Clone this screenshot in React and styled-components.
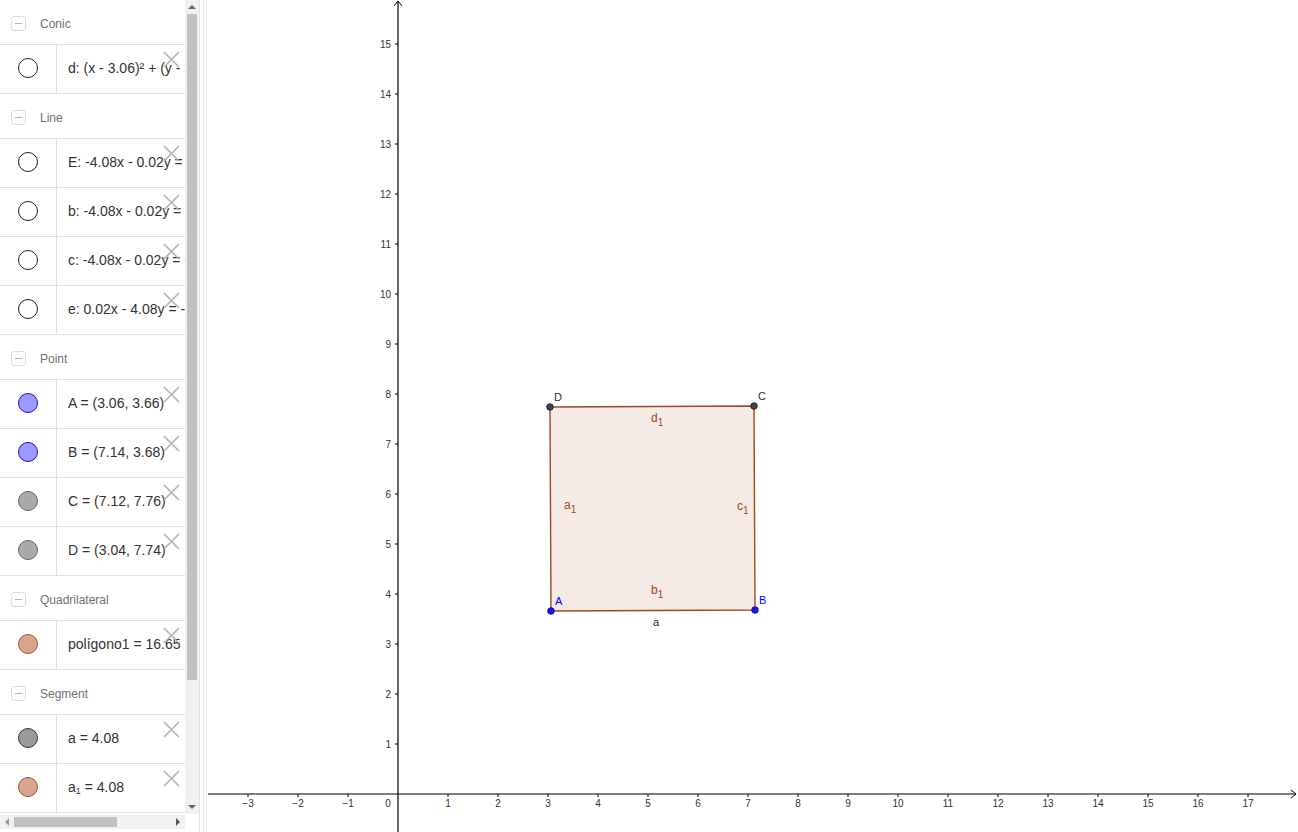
import React from 'react';
import styled, { createGlobalStyle } from 'styled-components';

const GlobalStyle = createGlobalStyle`
  html, body {
    margin: 0;
    padding: 0;
    background: #fff;
    overflow: hidden;
  }
  body {
    font-family: "Liberation Sans", Arial, sans-serif;
  }
`;

const sections = [
  {
    title: 'Conic',
    items: [{ id: 'd', text: 'd: (x - 3.06)² + (y - 3.7)² = 16.65', fill: '#fff', stroke: '#222' }],
  },
  {
    title: 'Line',
    items: [
      { id: 'E', text: 'E: -4.08x - 0.02y = -12.56', fill: '#fff', stroke: '#222' },
      { id: 'b', text: 'b: -4.08x - 0.02y = -29.21', fill: '#fff', stroke: '#222' },
      { id: 'c', text: 'c: -4.08x - 0.02y = -12.56', fill: '#fff', stroke: '#222' },
      { id: 'e', text: 'e: 0.02x - 4.08y = -14.87', fill: '#fff', stroke: '#222' },
    ],
  },
  {
    title: 'Point',
    items: [
      { id: 'A', text: 'A = (3.06, 3.66)', fill: '#9a9aff', stroke: '#1010e0' },
      { id: 'B', text: 'B = (7.14, 3.68)', fill: '#9a9aff', stroke: '#1010e0' },
      { id: 'C', text: 'C = (7.12, 7.76)', fill: '#a9a9a9', stroke: '#666' },
      { id: 'D', text: 'D = (3.04, 7.74)', fill: '#a9a9a9', stroke: '#666' },
    ],
  },
  {
    title: 'Quadrilateral',
    items: [{ id: 'pol', text: 'polígono1 = 16.65', fill: '#d8a690', stroke: '#a8542c' }],
  },
  {
    title: 'Segment',
    items: [
      { id: 'a', text: 'a = 4.08', fill: '#9a9a9a', stroke: '#333' },
      { id: 'a1', text: 'a', sub: '1', rest: ' = 4.08', fill: '#d8a690', stroke: '#a8542c' },
    ],
  },
];

const ORIGIN_X = 191;
const ORIGIN_Y = 794;
const UNIT = 50;

const toPx = (x, y) => [ORIGIN_X + x * UNIT, ORIGIN_Y - y * UNIT];

function CloseIcon() {
  return (
    <svg width="17" height="17" viewBox="0 0 17 17">
      <path d="M1 1 L16 16 M16 1 L1 16" stroke="#b4b4b4" strokeWidth="1.6" fill="none" />
    </svg>
  );
}

function AlgebraView() {
  return (
    <Sidebar>
      <ListArea>
        {sections.map((section) => (
          <React.Fragment key={section.title}>
            <GroupHeader>
              <CollapseBox>
                <span />
              </CollapseBox>
              <GroupTitle>{section.title}</GroupTitle>
            </GroupHeader>
            {section.items.map((item) => (
              <ItemRow key={item.id}>
                <MarbleCell>
                  <Marble $fill={item.fill} $stroke={item.stroke} />
                </MarbleCell>
                <ItemText>
                  {item.text}
                  {item.sub && <Sub>{item.sub}</Sub>}
                  {item.rest}
                </ItemText>
                <DeleteButton>
                  <CloseIcon />
                </DeleteButton>
              </ItemRow>
            ))}
          </React.Fragment>
        ))}
      </ListArea>
      <VScroll>
        <ArrowBox>
          <ArrowUp />
        </ArrowBox>
        <VTrack>
          <VThumb />
        </VTrack>
        <ArrowBox>
          <ArrowDown />
        </ArrowBox>
      </VScroll>
      <HScroll>
        <ArrowBox>
          <ArrowLeft />
        </ArrowBox>
        <HTrack>
          <HThumb />
        </HTrack>
        <ArrowBox>
          <ArrowRight />
        </ArrowBox>
      </HScroll>
      <Corner />
    </Sidebar>
  );
}

function GraphicsView() {
  const xs = [];
  for (let i = -3; i <= 17; i++) xs.push(i);
  const ys = [];
  for (let i = 1; i <= 15; i++) ys.push(i);

  const A = toPx(3.06, 3.66);
  const B = toPx(7.14, 3.68);
  const C = toPx(7.12, 7.76);
  const D = toPx(3.04, 7.74);
  const brown = '#a3471b';

  return (
    <Graphics>
      <svg width="1091" height="832" viewBox="0 0 1091 832">
        <g fontFamily="Liberation Sans, Arial, sans-serif" fontSize="10" fill="#333">
          {xs.map((i) => {
            const x = ORIGIN_X + i * UNIT;
            if (i === 0) {
              return (
                <text key={i} x={x - 10} y={807} textAnchor="middle">
                  0
                </text>
              );
            }
            return (
              <g key={i}>
                <line x1={x} y1={ORIGIN_Y} x2={x} y2={ORIGIN_Y + 3} stroke="#000" strokeWidth="1" />
                <text x={x} y={807} textAnchor="middle">
                  {i < 0 ? `\u2212${-i}` : i}
                </text>
              </g>
            );
          })}
          {ys.map((i) => {
            const y = ORIGIN_Y - i * UNIT;
            return (
              <g key={i}>
                <line x1={ORIGIN_X - 3} y1={y} x2={ORIGIN_X} y2={y} stroke="#000" strokeWidth="1" />
                <text x={ORIGIN_X - 7} y={y + 3.5} textAnchor="end">
                  {i}
                </text>
              </g>
            );
          })}
        </g>
        <line x1="1" y1={ORIGIN_Y} x2="1089" y2={ORIGIN_Y} stroke="#000" strokeWidth="1.2" />
        <path d={`M1084 ${ORIGIN_Y - 4} L1089 ${ORIGIN_Y} L1084 ${ORIGIN_Y + 4}`} stroke="#000" fill="none" />
        <line x1={ORIGIN_X} y1="832" x2={ORIGIN_X} y2="1" stroke="#000" strokeWidth="1.2" />
        <path d={`M${ORIGIN_X - 4} 6 L${ORIGIN_X} 1 L${ORIGIN_X + 4} 6`} stroke="#000" fill="none" />

        <polygon
          points={[A, B, C, D].map((p) => p.join(',')).join(' ')}
          fill="rgba(153,51,0,0.1)"
          stroke={brown}
          strokeWidth="1.4"
        />

        <g fontFamily="Liberation Sans, Arial, sans-serif" fontSize="12" fill={brown}>
          <text x={444} y={422}>
            d<tspan fontSize="10" dy="4">1</tspan>
          </text>
          <text x={357} y={509}>
            a<tspan fontSize="10" dy="4">1</tspan>
          </text>
          <text x={530} y={510}>
            c<tspan fontSize="10" dy="4">1</tspan>
          </text>
          <text x={444} y={594}>
            b<tspan fontSize="10" dy="4">1</tspan>
          </text>
        </g>
        <text x={446} y={626} fontFamily="Liberation Sans, Arial, sans-serif" fontSize="11" fill="#222">
          a
        </text>

        <g fontFamily="Liberation Sans, Arial, sans-serif" fontSize="11">
          <text x={A[0] + 4} y={A[1] - 6} fill="#0000ff">A</text>
          <text x={B[0] + 4} y={B[1] - 6} fill="#0000ff">B</text>
          <text x={C[0] + 4} y={C[1] - 6} fill="#333">C</text>
          <text x={D[0] + 4} y={D[1] - 6} fill="#333">D</text>
        </g>

        <circle cx={A[0]} cy={A[1]} r="3.3" fill="#1515ff" stroke="#000080" strokeWidth="0.8" />
        <circle cx={B[0]} cy={B[1]} r="3.3" fill="#1515ff" stroke="#000080" strokeWidth="0.8" />
        <circle cx={C[0]} cy={C[1]} r="3.3" fill="#444" stroke="#111" strokeWidth="0.8" />
        <circle cx={D[0]} cy={D[1]} r="3.3" fill="#444" stroke="#111" strokeWidth="0.8" />
      </svg>
    </Graphics>
  );
}

export default function App() {
  return (
    <>
      <GlobalStyle />
      <Page>
        <AlgebraView />
        <Splitter />
        <GraphicsView />
      </Page>
    </>
  );
}

const Page = styled.div`
  display: flex;
  width: 1298px;
  height: 832px;
  overflow: hidden;
  background: #fff;
`;

const Sidebar = styled.aside`
  display: grid;
  grid-template-columns: 185px 14px;
  grid-template-rows: 814px 16px;
  width: 199px;
  height: 832px;
  flex-shrink: 0;
`;

const ListArea = styled.div`
  overflow: hidden;
  display: flex;
  flex-direction: column;
`;

const GroupHeader = styled.div`
  display: flex;
  align-items: center;
  gap: 14px;
  height: 45px;
  box-sizing: border-box;
  padding: 3px 0 0 11px;
  border-bottom: 1px solid #e0e0e0;
  flex-shrink: 0;
`;

const CollapseBox = styled.div`
  width: 13px;
  height: 13px;
  border: 1px solid #dcdcdc;
  border-radius: 3px;
  display: flex;
  align-items: center;
  justify-content: center;

  span {
    width: 7px;
    height: 1px;
    background: #b0b0b0;
  }
`;

const GroupTitle = styled.span`
  font-size: 12px;
  color: #707070;
`;

const ItemRow = styled.div`
  position: relative;
  display: flex;
  align-items: center;
  height: 49px;
  box-sizing: border-box;
  border-bottom: 1px solid #e0e0e0;
  flex-shrink: 0;
`;

const MarbleCell = styled.div`
  width: 57px;
  height: 100%;
  box-sizing: border-box;
  border-right: 1px solid #e0e0e0;
  display: flex;
  align-items: center;
  justify-content: center;
  flex-shrink: 0;
  padding-bottom: 2px;
`;

const Marble = styled.div`
  width: 18px;
  height: 18px;
  border-radius: 50%;
  background: ${(p) => p.$fill};
  border: 1px solid ${(p) => p.$stroke};
`;

const ItemText = styled.div`
  padding: 0 0 2px 11px;
  font-size: 14px;
  color: #333;
  white-space: nowrap;
`;

const Sub = styled.sub`
  font-size: 9px;
  vertical-align: -2px;
`;

const DeleteButton = styled.div`
  position: absolute;
  left: 163px;
  top: 6px;
  width: 17px;
  height: 17px;
  line-height: 0;
`;

const ScrollBase = styled.div`
  background: #f1f1f1;
  display: flex;
`;

const VScroll = styled(ScrollBase)`
  flex-direction: column;
`;

const HScroll = styled(ScrollBase)`
  flex-direction: row;
  height: 14px;
  margin-top: 1px;
`;

const Corner = styled.div`
  background: #fff;
`;

const ArrowBox = styled.div`
  width: 14px;
  height: 14px;
  display: flex;
  align-items: center;
  justify-content: center;
  flex-shrink: 0;
`;

const ArrowUp = styled.div`
  width: 0;
  height: 0;
  border-left: 4px solid transparent;
  border-right: 4px solid transparent;
  border-bottom: 4px solid #666;
`;

const ArrowDown = styled.div`
  width: 0;
  height: 0;
  border-left: 4px solid transparent;
  border-right: 4px solid transparent;
  border-top: 4px solid #666;
`;

const ArrowLeft = styled.div`
  width: 0;
  height: 0;
  border-top: 4px solid transparent;
  border-bottom: 4px solid transparent;
  border-right: 4px solid #999;
`;

const ArrowRight = styled.div`
  width: 0;
  height: 0;
  border-top: 4px solid transparent;
  border-bottom: 4px solid transparent;
  border-left: 4px solid #555;
`;

const VTrack = styled.div`
  flex: 1;
  padding: 0 2px;
`;

const VThumb = styled.div`
  height: 666px;
  background: #c1c1c1;
`;

const HTrack = styled.div`
  flex: 1;
  padding: 2px 0;
`;

const HThumb = styled.div`
  width: 103px;
  height: 100%;
  background: #c1c1c1;
`;

const Splitter = styled.div`
  width: 8px;
  height: 832px;
  flex-shrink: 0;
  box-sizing: border-box;
  border-left: 1px solid #e2e2e2;
  border-right: 1px solid #ececec;
  background: linear-gradient(to right, #fff 0, #fff 3px, #e6e6e6 3px, #e6e6e6 4px, #fff 4px);
`;

const Graphics = styled.main`
  flex: 1;
  height: 832px;
  overflow: hidden;
  line-height: 0;
`;
